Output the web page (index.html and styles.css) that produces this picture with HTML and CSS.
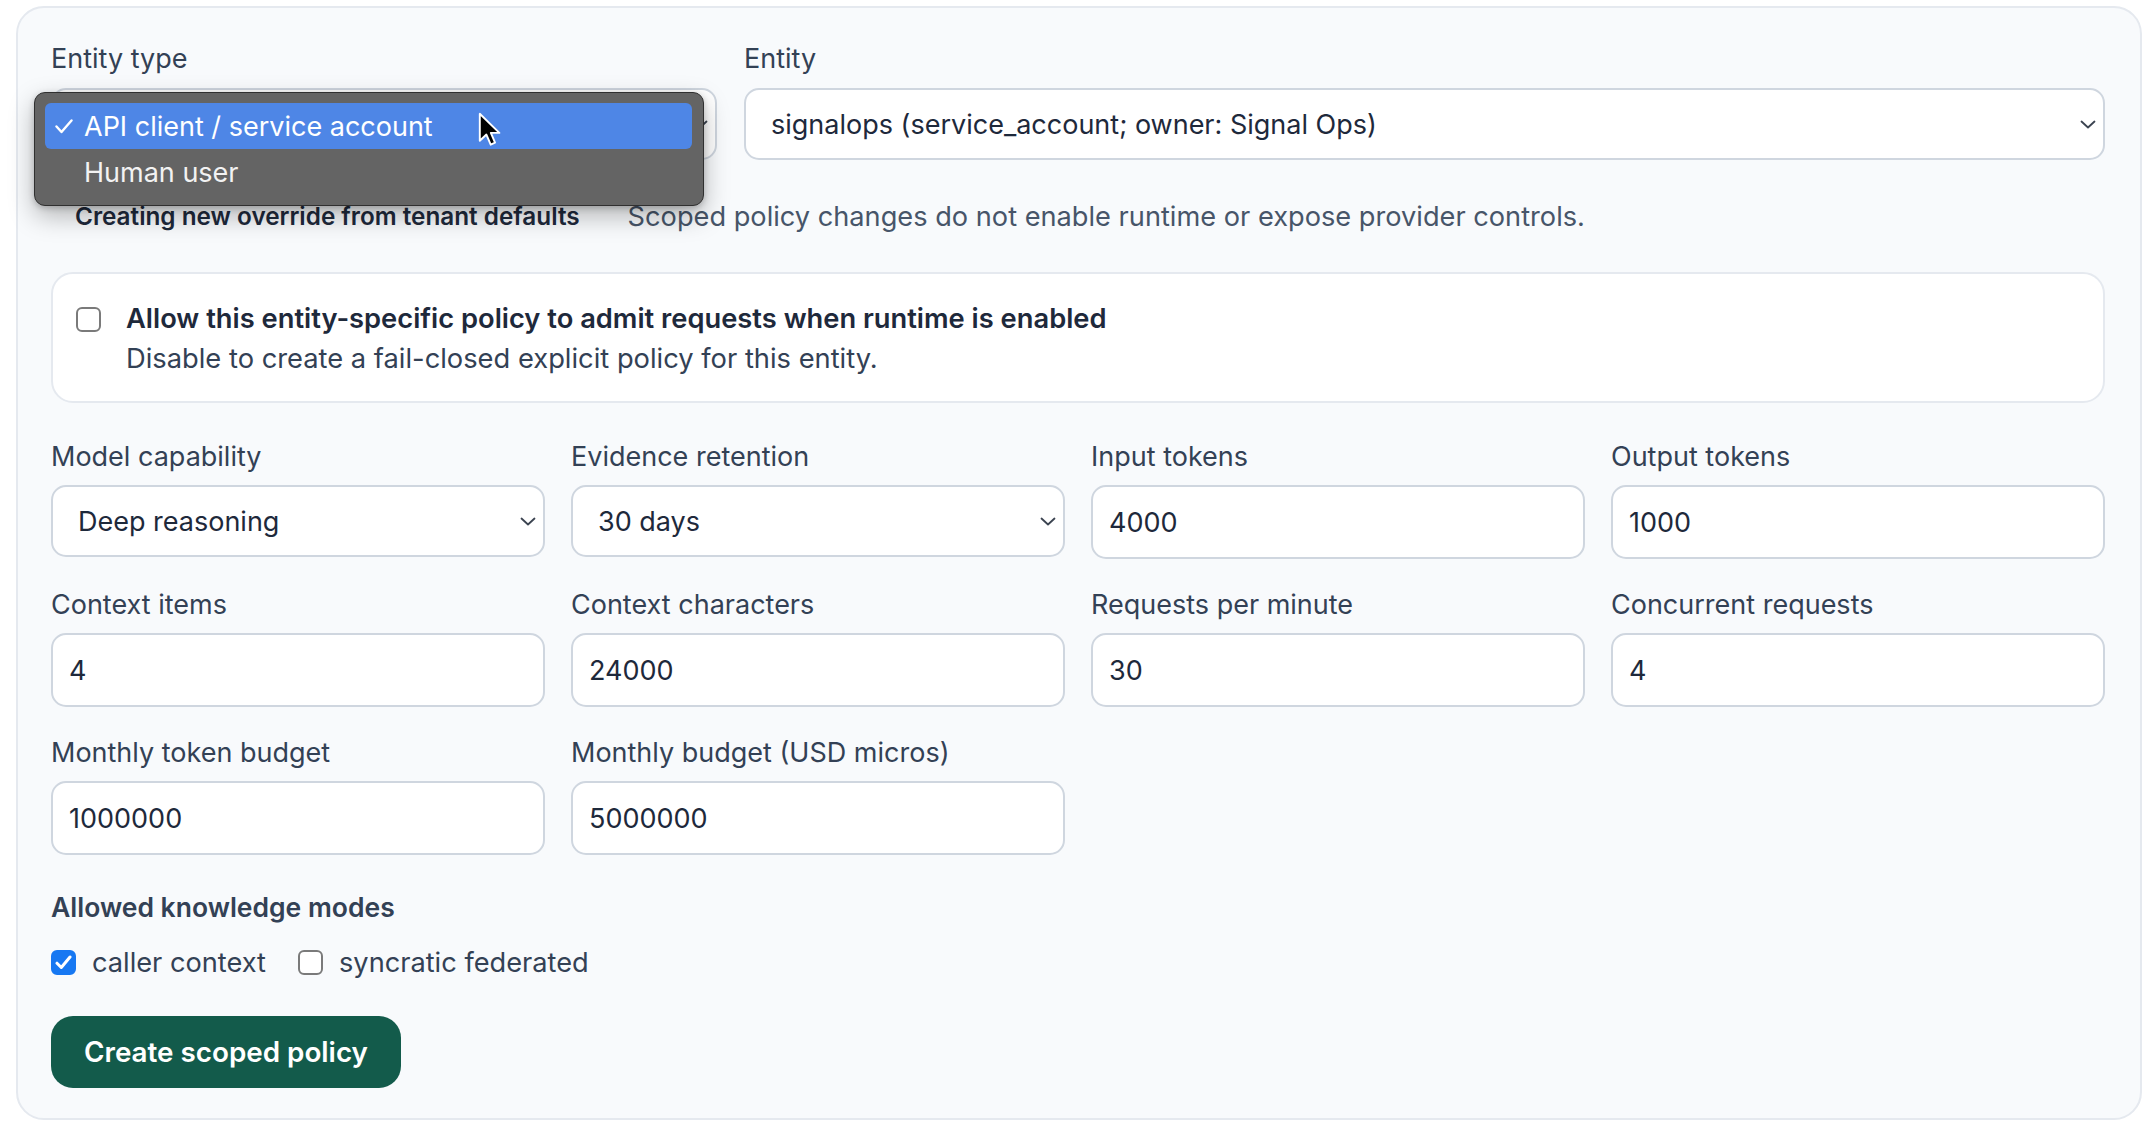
FILE: index.html
```html
<!DOCTYPE html>
<html lang="en">
<head>
<meta charset="utf-8">
<title>Create scoped policy</title>
<link rel="stylesheet" href="styles.css">
</head>
<body>
<main class="page">
  <form class="card">
    <div class="top-row">
      <div class="field">
        <label class="label" for="etype">Entity type</label>
        <div class="select-wrap">
          <select id="etype" class="control select">
            <option>API client / service account</option>
            <option>Human user</option>
          </select>
          <svg class="chev" width="16" height="9" viewBox="0 0 16 9"><path d="M1.5 1.5 L8 7.5 L14.5 1.5"/></svg>
          <div class="popup">
            <div class="opt opt-sel"><span class="tick"><svg width="18" height="15" viewBox="0 0 18 15"><path d="M1.5 7.5 L6.5 13 L16.5 1.5"/></svg></span>API client / service account</div>
            <div class="opt"><span class="tick"></span>Human user</div>
          </div>
          <svg class="cursor" width="24" height="36" viewBox="0 0 20 30"><path d="M1.5 1.5 L1.5 24 L7 18.8 L10.6 27.2 L14.2 25.6 L10.7 17.4 L17.8 17.4 Z"/></svg>
        </div>
      </div>
      <div class="field">
        <label class="label" for="entity">Entity</label>
        <div class="select-wrap">
          <select id="entity" class="control select">
            <option>signalops (service_account; owner: Signal Ops)</option>
          </select>
          <svg class="chev" width="16" height="9" viewBox="0 0 16 9"><path d="M1.5 1.5 L8 7.5 L14.5 1.5"/></svg>
        </div>
      </div>
    </div>

    <div class="meta">
      <span class="badge">Creating new override from tenant defaults</span>
      <span class="note">Scoped policy changes do not enable runtime or expose provider controls.</span>
    </div>

    <label class="toggle-card">
      <input type="checkbox" class="sr">
      <span class="box"></span>
      <span class="toggle-text">
        <span class="toggle-title">Allow this entity-specific policy to admit requests when runtime is enabled</span>
        <span class="toggle-sub">Disable to create a fail-closed explicit policy for this entity.</span>
      </span>
    </label>

    <div class="grid">
      <div class="field">
        <label class="label" for="cap">Model capability</label>
        <div class="select-wrap">
          <select id="cap" class="control select"><option>Deep reasoning</option></select>
          <svg class="chev" width="16" height="9" viewBox="0 0 16 9"><path d="M1.5 1.5 L8 7.5 L14.5 1.5"/></svg>
        </div>
      </div>
      <div class="field">
        <label class="label" for="ret">Evidence retention</label>
        <div class="select-wrap">
          <select id="ret" class="control select"><option>30 days</option></select>
          <svg class="chev" width="16" height="9" viewBox="0 0 16 9"><path d="M1.5 1.5 L8 7.5 L14.5 1.5"/></svg>
        </div>
      </div>
      <div class="field">
        <label class="label" for="in">Input tokens</label>
        <input id="in" class="control input" value="4000">
      </div>
      <div class="field">
        <label class="label" for="out">Output tokens</label>
        <input id="out" class="control input" value="1000">
      </div>
      <div class="field">
        <label class="label" for="ci">Context items</label>
        <input id="ci" class="control input" value="4">
      </div>
      <div class="field">
        <label class="label" for="cc">Context characters</label>
        <input id="cc" class="control input" value="24000">
      </div>
      <div class="field">
        <label class="label" for="rpm">Requests per minute</label>
        <input id="rpm" class="control input" value="30">
      </div>
      <div class="field">
        <label class="label" for="conc">Concurrent requests</label>
        <input id="conc" class="control input" value="4">
      </div>
      <div class="field">
        <label class="label" for="mtb">Monthly token budget</label>
        <input id="mtb" class="control input" value="1000000">
      </div>
      <div class="field">
        <label class="label" for="mbu">Monthly budget (USD micros)</label>
        <input id="mbu" class="control input" value="5000000">
      </div>
    </div>

    <fieldset class="modes">
      <legend class="modes-title">Allowed knowledge modes</legend>
      <div class="modes-row">
        <label class="mode">
          <input type="checkbox" class="sr" checked>
          <span class="box box-on"><svg width="17" height="15" viewBox="0 0 17 15"><path d="M2 8.2 L6.3 12.5 L15 2"/></svg></span>
          <span>caller context</span>
        </label>
        <label class="mode">
          <input type="checkbox" class="sr">
          <span class="box"></span>
          <span>syncratic federated</span>
        </label>
      </div>
    </fieldset>

    <button type="button" class="primary">Create scoped policy</button>
  </form>
</main>
</body>
</html>
```

FILE: styles.css
```css
* { box-sizing: border-box; }

html, body {
  margin: 0;
  padding: 0;
  background: #ffffff;
}

body {
  font-family: "Inter", "Liberation Sans", sans-serif;
  color: #334155;
}

.page {
  padding: 6px 4px 10px 16px;
}

.card {
  background: #f8fafc;
  border: 2px solid #e5e9ef;
  border-radius: 28px;
  padding: 34px 35px 30px 33px;
  display: flex;
  flex-direction: column;
}

.top-row {
  display: grid;
  grid-template-columns: 666fr 1361fr;
  column-gap: 27px;
}

.field {
  display: flex;
  flex-direction: column;
  gap: 12px;
  min-width: 0;
}

.label {
  font-size: 27px;
  line-height: 34px;
  color: #334155;
}

.select-wrap {
  position: relative;
}

.control {
  display: block;
  width: 100%;
  font-family: inherit;
  font-size: 27px;
  color: #1e293b;
  background: #ffffff;
  border: 2px solid #cfd6df;
  border-radius: 15px;
  margin: 0;
  outline: none;
}

.select {
  -webkit-appearance: none;
  appearance: none;
  height: 72px;
  padding: 0 40px 0 25px;
}

.input {
  height: 74px;
  padding: 0 16px;
}

.chev {
  position: absolute;
  right: 9px;
  top: 32px;
  fill: none;
  stroke: #3b4350;
  stroke-width: 1.8;
  stroke-linecap: round;
  stroke-linejoin: round;
  pointer-events: none;
}

/* open native-looking menu over the Entity type select */
.popup {
  position: absolute;
  left: -17px;
  top: 4px;
  width: 670px;
  padding: 10px 11px 10px 10px;
  background: #646464;
  border: 1.5px solid #303030;
  border-radius: 11px;
  box-shadow: 0 10px 26px rgba(0, 0, 0, 0.28), 0 2px 6px rgba(0, 0, 0, 0.2);
  z-index: 5;
}

.opt {
  display: flex;
  align-items: center;
  height: 46px;
  padding-left: 10px;
  font-size: 27px;
  color: #f2f2f2;
  border-radius: 6px;
}

.opt-sel {
  background: #4e86e6;
  color: #ffffff;
}

.tick {
  width: 29px;
  flex: none;
  display: flex;
  align-items: center;
}

.tick svg {
  fill: none;
  stroke: #ffffff;
  stroke-width: 2.4;
  stroke-linecap: round;
  stroke-linejoin: round;
}

.cursor {
  position: absolute;
  left: 427px;
  top: 24px;
  z-index: 6;
  fill: #000000;
  stroke: #ffffff;
  stroke-width: 1.6;
  stroke-linejoin: round;
}

.meta {
  margin-top: 38px;
  display: flex;
  align-items: center;
  gap: 24px;
  height: 36px;
}

.badge {
  padding: 0 24px;
  font-size: 24.3px;
  font-weight: 600;
  color: #1e293b;
}

.note {
  font-size: 27.2px;
  color: #475569;
}

.sr {
  position: absolute;
  opacity: 0;
  width: 1px;
  height: 1px;
  margin: 0;
  pointer-events: none;
}

.toggle-card {
  position: relative;
  margin-top: 38px;
  display: flex;
  align-items: flex-start;
  gap: 25px;
  background: #ffffff;
  border: 2px solid #e5e9ef;
  border-radius: 22px;
  padding: 25px 24px 21px 23px;
  height: 131px;
}

.box {
  flex: none;
  width: 25px;
  height: 25px;
  border: 2px solid #7a7a7a;
  border-radius: 6px;
  background: #ffffff;
  display: flex;
  align-items: center;
  justify-content: center;
}

.toggle-card .box {
  margin-top: 8px;
}

.box-on {
  background: #1778f2;
  border-color: #1778f2;
}

.box-on svg {
  fill: none;
  stroke: #ffffff;
  stroke-width: 3;
  stroke-linecap: round;
  stroke-linejoin: round;
}

.toggle-text {
  display: flex;
  flex-direction: column;
  font-size: 27.3px;
  line-height: 40px;
}

.toggle-title {
  font-weight: 600;
  color: #1e293b;
}

.toggle-sub {
  color: #334155;
}

.grid {
  margin-top: 37px;
  display: grid;
  grid-template-columns: repeat(4, 1fr);
  column-gap: 26px;
  row-gap: 29px;
}

.grid .field {
  gap: 11px;
}

.modes {
  margin: 35px 0 0 0;
  padding: 0;
  border: 0;
  min-width: 0;
}

.modes-title {
  padding: 0;
  font-size: 26.5px;
  line-height: 34px;
  font-weight: 600;
  color: #334155;
}

.modes-row {
  margin-top: 20px;
  display: flex;
  align-items: center;
  height: 36px;
  gap: 32px;
}

.mode {
  position: relative;
  display: flex;
  align-items: center;
  gap: 16px;
  font-size: 27.2px;
  color: #334155;
}

.primary {
  margin-top: 36px;
  align-self: flex-start;
  height: 72px;
  padding: 0 33px;
  font-family: inherit;
  font-size: 27.8px;
  font-weight: 600;
  color: #ffffff;
  background: #135b4b;
  border: 0;
  border-radius: 22px;
}
```
